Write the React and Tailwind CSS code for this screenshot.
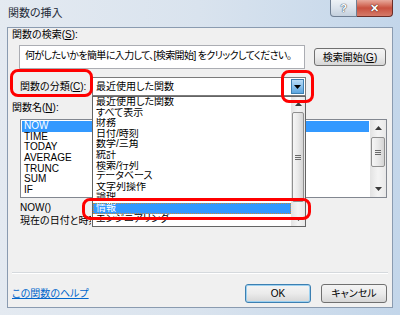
import React from 'react';

const FONT = "font-['Liberation_Sans','Noto_Sans_CJK_JP',sans-serif] [font-feature-settings:'palt']";

function Arrow({ up }) {
    return (
        <svg width="7" height="4" viewBox="0 0 7 4">
            {up ? <path d="M0 4 L3.5 0 L7 4 Z" fill="#3a3a3a" /> : <path d="M0 0 L3.5 4 L7 0 Z" fill="#3a3a3a" />}
        </svg>
    );
}

function ScrollBar({ w, arrowH, gapTop, thumbH }) {
    return (
        <div className={`flex flex-col h-full shrink-0 bg-gradient-to-r from-[#e3e3e3] via-[#f4f4f4] to-[#e8e8e8]`} style={{ width: w }}>
            <div className="flex items-center justify-center shrink-0" style={{ height: arrowH }}>
                <Arrow up />
            </div>
            <div style={{ height: gapTop }} className="shrink-0" />
            <div
                className="mx-[1px] shrink-0 rounded-[2px] border border-[#8f8f8f] bg-gradient-to-r from-[#f6f6f6] via-[#e9e9e9] to-[#d4d4d4] flex flex-col items-center justify-center gap-[1px]"
                style={{ height: thumbH }}
            >
                <div className="w-[6px] h-px bg-[#6a6a6a]" />
                <div className="w-[6px] h-px bg-[#6a6a6a]" />
                <div className="w-[6px] h-px bg-[#6a6a6a]" />
            </div>
            <div className="flex-1" />
            <div className="flex items-center justify-center shrink-0" style={{ height: arrowH }}>
                <Arrow />
            </div>
        </div>
    );
}

function Btn({ children, def, className = '' }) {
    return (
        <div
            className={`flex items-center justify-center rounded-[3px] border ${def ? 'border-[#3c7fb1] shadow-[inset_0_0_0_1px_#9bd0f0]' : 'border-[#707070]'} bg-gradient-to-b from-[#f4f4f4] via-[#ebebeb] to-[#d6d6d6] text-[10px] ${className}`}
        >
            {children}
        </div>
    );
}

const categories = ['最近使用した関数', 'すべて表示', '財務', '日付/時刻', '数学/三角', '統計', '検索/行列', 'データベース', '文字列操作', '論理', '情報', 'エンジニアリング'];
const functions = ['NOW', 'TIME', 'TODAY', 'AVERAGE', 'TRUNC', 'SUM', 'IF'];

export default function App() {
    return (
        <div className={`w-[400px] h-[315px] relative overflow-hidden bg-gradient-to-r from-[#e4eaf1] via-[#d9e3ee] to-[#c3d6ea] text-black ${FONT}`}>
            {/* title bar */}
            <div className="h-[27px] flex items-start">
                <span className="ml-[8px] mt-[6px] text-[11px] leading-[14px] text-[#1e2a38]">関数の挿入</span>
                <div className="ml-auto mr-[7px] flex">
                    <div className="w-[27px] h-[17px] rounded-bl-[4px] border border-t-0 border-[#6f7f93] bg-gradient-to-b from-[#eef2f6] via-[#dbe3ec] to-[#c4d0dd] flex items-center justify-center">
                        <span className="text-[11px] leading-none font-bold text-white [text-shadow:0_0_1px_#2b3a4c,0_0_1px_#2b3a4c]">?</span>
                    </div>
                    <div className="w-[36px] h-[17px] rounded-br-[4px] border border-t-0 border-l-0 border-[#6b2d27] bg-gradient-to-b from-[#e7a99c] via-[#c8503f] to-[#d57a69] flex items-center justify-center">
                        <span className="text-[11px] leading-none font-bold text-white [text-shadow:0_0_1px_#40100b,0_0_1px_#40100b]">✕</span>
                    </div>
                </div>
            </div>

            {/* client area */}
            <div className="mx-[7px] h-[281px] bg-[#f0f0f0] border border-[#8a9bb0] flex flex-col text-[10px]">
                <div className="pl-[4px] leading-[14px] h-[14px]">関数の検索(<u>S</u>):</div>

                <div className="mt-[3px] h-[24px] flex items-center">
                    <div className="ml-[11px] w-[286px] h-[24px] bg-white border border-[#abadb3] pl-[5px] pt-[4px] leading-[12px] tracking-[-0.6px] whitespace-nowrap overflow-hidden">
                        何がしたいかを簡単に入力して、[検索開始] をクリックしてください。
                    </div>
                    <Btn className="ml-[9px] w-[72px] h-[18px]">検索開始(<u>G</u>)</Btn>
                </div>

                <div className="mt-[8px] h-[19px] flex items-center">
                    <div className="ml-[12px] w-[72px] leading-[14px]">関数の分類(<u>C</u>):</div>
                    <div className="relative w-[214px] h-[19px] bg-white border border-[#7b7b7b] flex items-center">
                        <span className="pl-[3px] leading-[14px]">最近使用した関数</span>
                        <div className="ml-auto mr-[1px] w-[13px] h-[15px] border border-[#3c7fb1] bg-gradient-to-b from-[#b9dcf6] to-[#5aa6e0] flex items-center justify-center">
                            <svg width="7" height="4" viewBox="0 0 7 4"><path d="M0 0 L3.5 4 L7 0 Z" fill="#000" /></svg>
                        </div>

                        {/* open dropdown */}
                        <div className="absolute left-[-1px] top-[18px] w-[214px] h-[131px] bg-white border border-[#646464] flex z-10">
                            <div className="flex-1 flex flex-col overflow-hidden">
                                {categories.map((c) => (
                                    <div
                                        key={c}
                                        className={`h-[10.6px] leading-[10.6px] pl-[3px] whitespace-nowrap overflow-hidden shrink-0 ${c === '情報' ? 'bg-[#3399ff] text-white outline outline-1 outline-dotted outline-[#c88a3a] -outline-offset-1' : ''}`}
                                    >
                                        {c}
                                    </div>
                                ))}
                            </div>
                            <ScrollBar w={14} arrowH={14} gapTop={1} thumbH={90} />
                        </div>
                    </div>
                </div>

                <div className="mt-[5px] pl-[4px] leading-[14px] h-[14px]">関数名(<u>N</u>):</div>

                <div className="mt-[4px] ml-[12px] w-[367px] h-[79px] bg-white border border-[#828790] flex">
                    <div className="flex-1 p-[1px] flex flex-col">
                        {functions.map((f, i) => (
                            <div
                                key={f}
                                className={`h-[10.7px] leading-[10.7px] pl-[2px] shrink-0 ${i === 0 ? 'bg-[#3399ff] text-white' : ''}`}
                            >
                                {f}
                            </div>
                        ))}
                    </div>
                    <ScrollBar w={16} arrowH={16} gapTop={1} thumbH={30} />
                </div>

                <div className="mt-[3px] pl-[12px] leading-[13px]">NOW()</div>
                <div className="ml-[12px] w-[71px] leading-[13px] whitespace-nowrap overflow-hidden">現在の日付と時刻に対応するシリアル値を返します。</div>

                <div className="mt-[45px] mx-[4px] h-px bg-[#d5d9dd] shadow-[0_1px_0_#ffffff]" />

                <div className="mt-[11px] h-[19px] flex items-center">
                    <span className="pl-[4px] text-[#0066cc] underline leading-[14px]">この関数のヘルプ</span>
                    <div className="ml-auto mr-[5px] flex gap-[10px]">
                        <Btn def className="w-[66px] h-[19px]">OK</Btn>
                        <Btn className="w-[66px] h-[19px]">キャンセル</Btn>
                    </div>
                </div>
            </div>

            {/* red annotations */}
            <div className="absolute left-[10px] top-[69px] w-[83px] h-[28px] border-[3px] border-[#ff0000] rounded-[8px] z-20" />
            <div className="absolute left-[281px] top-[70px] w-[33px] h-[33px] border-[3px] border-[#ff0000] rounded-[8px] z-20" />
            <div className="absolute left-[82px] top-[198px] w-[229px] h-[22px] border-[3px] border-[#ff0000] rounded-[8px] z-20" />
        </div>
    );
}
